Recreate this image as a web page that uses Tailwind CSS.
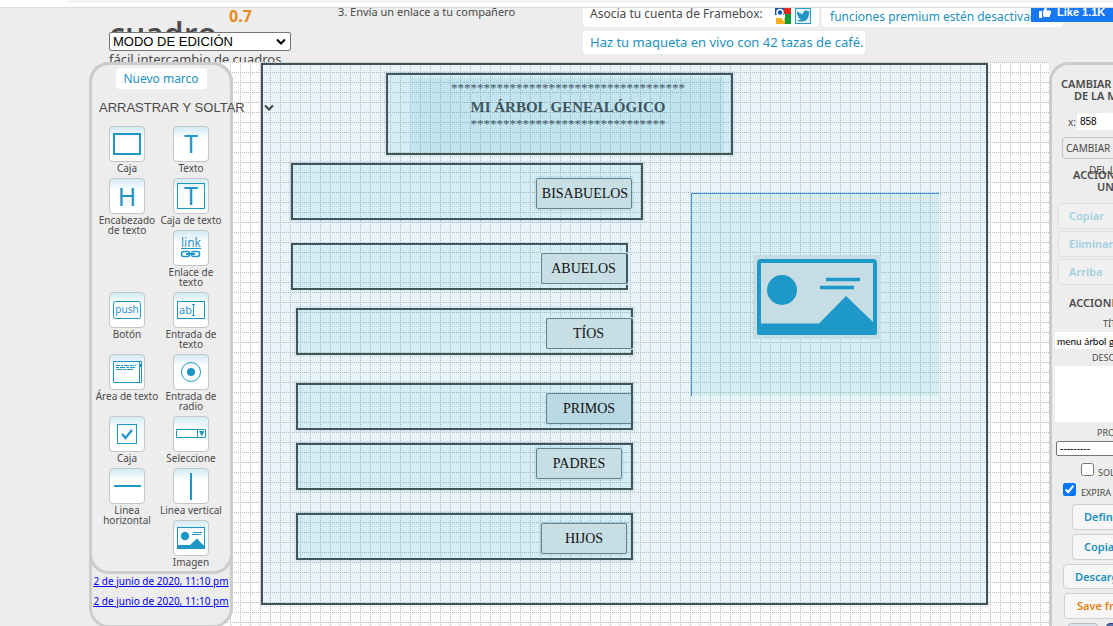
<!DOCTYPE html>
<html lang="es">
<head>
<meta charset="utf-8">
<meta name="viewport" content="width=device-width, initial-scale=1">
<title>cuadro 0.7</title>
<script src="https://cdn.jsdelivr.net/npm/@tailwindcss/browser@4"></script>
</head>
<body class="flex h-screen flex-col overflow-hidden bg-[#ededed] font-['Noto_Sans',sans-serif] text-[#4a4a4a]">

<div class="h-2 shrink-0 border-b border-[#dadcdc] bg-white">
  <div class="ml-[67px] h-[3px] rounded-bl-lg bg-[#f1f3f4]"></div>
</div>

<header class="flex h-[54px] shrink-0 items-start overflow-hidden">
  <div class="relative ml-[109px] w-[182px] shrink-0">
    <h1 class="h-6 pt-1.5 font-['Open_Sans',sans-serif] text-[32px] font-semibold leading-10 text-[#4c4c4c]">cuadro</h1>
    <span class="absolute left-[120px] top-0 text-base font-bold leading-4 text-[#e98a1c]">0.7</span>
    <div class="relative">
      <select aria-label="Modo" class="block h-[19px] w-full appearance-none rounded-xs border border-[#767676] bg-white pl-[3px] font-['Liberation_Sans',sans-serif] text-[13px] leading-4 text-black"><option>MODO DE EDICIÓN</option></select>
      <svg class="pointer-events-none absolute right-1 top-1.5 h-2 w-3" viewBox="0 0 12 8" fill="none" stroke="#000" stroke-width="2"><path d="M2 1.500 6 5.500 10 1.500"/></svg>
    </div>
    <p class="whitespace-nowrap text-[13px] leading-4">fácil intercambio de cuadros</p>
  </div>
  <ol start="3" class="-mt-1 ml-[47px] w-[245px] shrink-0 whitespace-nowrap text-[11px] leading-4"><li>3. Envía un enlace a tu compañero</li></ol>
  <div class="relative min-w-0 flex-1">
    <div class="flex gap-[3px] whitespace-nowrap text-xs">
      <div class="-mt-1 flex h-[23px] w-[236px] shrink-0 items-center gap-1 rounded-b bg-white pl-[7px]">
        <span class="w-[181px] -mt-1">Asocia tu cuenta de Framebox:</span>
        <svg class="size-4 shrink-0" viewBox="0 0 16 16"><rect width="16" height="16" rx="1" fill="#fff"/><path d="M9 0h7v6H9z" fill="#e02a20"/><path d="M10 6h6v10h-6z" fill="#119a3c"/><path d="M0 0h9v7H0z" fill="#1c53b8"/><path d="M1 10h9v6H1z" fill="#f6b21b"/><circle cx="5" cy="4.500" r="3" fill="none" stroke="#fff" stroke-width="1.500"/><path d="M4 8c2 2 5 2 5 5" fill="none" stroke="#fff" stroke-width="1.500"/></svg>
        <svg class="size-4 shrink-0" viewBox="0 0 16 16"><rect x=".5" y=".5" width="15" height="15" fill="#e6f4fa" stroke="#2b9ccb"/><path d="M2 3c2 2 4 3 6 3 0-2 1-3.500 3-3.500 1 0 2 .5 2.500 1L15 3l-1 2c0 5-3 8.500-7 8.500-2 0-4-.5-5-1.500 2 0 3 0 4-1-2-.5-2.500-1-3-2.500h1C2.500 7.500 2 6.500 2 5z" fill="#1f95c6"/></svg>
      </div>
      <div class="-mt-1 flex h-[23px] w-[241px] shrink-0 items-center rounded-b bg-white pl-2 pt-0.5 text-[#1b91c0]"><a href="#">funciones premium estén desactivadas</a></div>
    </div>
    <a href="#" class="mt-1 inline-flex h-[23px] w-[282px] items-center whitespace-nowrap rounded bg-white pl-[7px] text-[13px] text-[#1b91c0]">Haz tu maqueta en vivo con 42 tazas de café.</a>
    <button class="absolute -top-1.5 right-0 flex h-5 w-[82px] items-center gap-1.5 bg-[#1877f2] pl-2 font-['Liberation_Sans',sans-serif] text-[11px] font-bold text-white">
      <svg class="size-3 shrink-0" viewBox="0 0 12 12" fill="#fff"><path d="M0 5h3v7H0zM4 5.500 6.500 1c1.500 0 1.500 1.500 1 3.500H11c1 0 1.300 1 .8 1.600.3.600.2 1.200-.3 1.600.2.700 0 1.200-.5 1.600 0 1.500-.5 1.700-1.500 1.700H6L4 10.500z"/></svg>
      <span class="whitespace-nowrap">Like 1.1K</span>
    </button>
  </div>
</header>

<main class="flex min-h-0 flex-1 overflow-hidden">

  <aside class="relative z-10 ml-[89px] h-[566px] w-36 shrink-0 rounded-[20px] border-[3px] border-[#cccccc] bg-[#ededed]">
    <section class="-m-[3px] h-[512px] rounded-[20px] border-[3px] border-[#cccccc]">
      <div class="flex justify-center pt-[3px]"><button class="h-[21px] w-[91px] rounded bg-white text-xs text-[#1b91c0]">Nuevo marco</button></div>
      <div class="relative ml-[7px] mt-[9px] w-[180px]">
        <select aria-label="Herramientas" class="block h-5 w-full appearance-none bg-transparent font-['Liberation_Sans',sans-serif] text-[13px] leading-5 text-[#4a4a4a]"><option>ARRASTRAR Y SOLTAR</option></select>
        <svg class="pointer-events-none absolute right-1 top-1.5 h-2 w-3" viewBox="0 0 12 8" fill="none" stroke="#444" stroke-width="2"><path d="M2 1.500 6 5.500 10 1.500"/></svg>
      </div>
      <ul class="ml-[3px] mt-2 grid w-32 grid-cols-2 items-start text-center text-[10px] leading-[10px] [&_button]:mb-px [&_button]:block [&_button]:size-9 [&_button]:rounded [&_button]:border [&_button]:border-[#c6c6c6] [&_button]:bg-linear-to-b [&_button]:from-[#d3ebf5] [&_button]:to-white [&_button]:to-35% [&_li]:flex [&_li]:flex-col [&_li]:items-center [&_li]:pb-[5px] [&_svg]:size-[34px]">
        <li><button aria-labelledby="t1"><svg viewBox="0 0 34 34"><rect x="4" y="7" width="26" height="20" fill="none" stroke="#1e96c6" stroke-width="2"/></svg></button><span id="t1">Caja</span></li>
        <li><button aria-labelledby="t2"><svg viewBox="0 0 34 34"><text x="17" y="26" text-anchor="middle" font-size="25" fill="#1e96c6">T</text></svg></button><span id="t2">Texto</span></li>
        <li class="row-span-2"><button aria-labelledby="t3"><svg viewBox="0 0 34 34"><text x="17" y="27" text-anchor="middle" font-size="25" fill="#1e96c6">H</text></svg></button><span id="t3">Encabezado<br>de texto</span></li>
        <li><button aria-labelledby="t4"><svg viewBox="0 0 34 34"><rect x="3.500" y="4.500" width="27" height="25" fill="none" stroke="#1e96c6"/><text x="17" y="26" text-anchor="middle" font-size="25" fill="#1e96c6">T</text></svg></button><span id="t4" class="whitespace-nowrap">Caja de texto</span></li>
        <li><button aria-labelledby="t5"><svg viewBox="0 0 34 34" fill="none" stroke="#1e96c6"><text x="17" y="16" text-anchor="middle" font-size="12" fill="#1e96c6" stroke="none">link</text><path d="M7 17.500h20"/><rect x="7.500" y="20.500" width="8" height="5" rx="2" stroke-width="1.500"/><rect x="17.500" y="20.500" width="8" height="5" rx="2" stroke-width="1.500"/><path d="M12 23h9" stroke-width="2"/></svg></button><span id="t5">Enlace de<br>texto</span></li>
        <li><button aria-labelledby="t6"><svg viewBox="0 0 34 34"><rect x="3.500" y="8.500" width="27" height="17" rx="2" fill="none" stroke="#1e96c6"/><text x="17" y="20" text-anchor="middle" font-size="10" fill="#1e96c6">push</text></svg></button><span id="t6">Botón</span></li>
        <li><button aria-labelledby="t7"><svg viewBox="0 0 34 34" fill="none" stroke="#1e96c6"><rect x="3.500" y="8.500" width="27" height="17"/><text x="5" y="21" font-size="11" fill="#1e96c6" stroke="none">ab</text><path d="M18 11.500h3M18 22.500h3M19.500 11.500v11"/></svg></button><span id="t7">Entrada de<br>texto</span></li>
        <li><button aria-labelledby="t8"><svg viewBox="0 0 34 34" fill="none" stroke="#1e96c6"><path d="M3.500 6.500h28v21h-28zM29.500 6v22"/><path d="M30.500 9v3" stroke-width="2"/><path d="M6 10.500h20" stroke-dasharray="4 1 2 1 5 1"/><path d="M6 12.500h19" stroke-dasharray="3 1 5 1"/><path d="M6 14.500h18" stroke-dasharray="6 1 3 1"/></svg></button><span id="t8" class="whitespace-nowrap">Área de texto</span></li>
        <li><button aria-labelledby="t9"><svg viewBox="0 0 34 34"><circle cx="17" cy="17" r="9.500" fill="none" stroke="#1e96c6"/><circle cx="17" cy="17" r="4" fill="#1e96c6"/></svg></button><span id="t9">Entrada de<br>radio</span></li>
        <li><button aria-labelledby="t10"><svg viewBox="0 0 34 34" fill="none" stroke="#1e96c6"><rect x="7.500" y="7.500" width="19" height="19"/><path d="m12 17 3.500 4L22 13" stroke-width="2.200"/></svg></button><span id="t10">Caja</span></li>
        <li><button aria-labelledby="t11"><svg viewBox="0 0 34 34" fill="none" stroke="#1e96c6"><path d="M2.500 12.500h29v8h-29zM23.500 12v9"/><path d="M25 14h5.500L28 19h-.5z" fill="#1e96c6" stroke="none"/></svg></button><span id="t11">Seleccione</span></li>
        <li class="row-span-2"><button aria-labelledby="t12"><svg viewBox="0 0 34 34"><path d="M4 16h27v2H4z" fill="#1e96c6"/></svg></button><span id="t12">Linea<br>horizontal</span></li>
        <li><button aria-labelledby="t13"><svg viewBox="0 0 34 34"><path d="M16 4h2v27h-2z" fill="#1e96c6"/></svg></button><span id="t13" class="whitespace-nowrap">Linea vertical</span></li>
        <li><button aria-labelledby="t14"><svg viewBox="0 0 34 34"><rect x="3.500" y="6.500" width="27" height="21" fill="none" stroke="#1e96c6"/><circle cx="11" cy="15" r="4.200" fill="#1e96c6"/><path d="M3 24h13l7-6.500 6 6.500h2v4H3z" fill="#1e96c6"/><path d="M19 11.500h9M18 13.500h9" stroke="#1e96c6"/></svg></button><span id="t14">Imagen</span></li>
      </ul>
    </section>
    <nav class="-mx-[3px] mt-1 flex flex-col items-center gap-2 whitespace-nowrap text-[10px] leading-3 text-[#0000ee] underline">
      <a href="#">2 de junio de 2020, 11:10 pm</a>
      <a href="#">2 de junio de 2020, 11:10 pm</a>
    </nav>
  </aside>

  <!-- Free canvas: frames keep their own coordinates on a 10px dotted grid -->
  <section class="relative -ml-[13px] min-w-0 flex-1 overflow-hidden bg-white font-['Liberation_Serif',serif] text-[14px] leading-5 text-[#111]">
    <svg class="absolute inset-0 size-full" aria-hidden="true" shape-rendering="crispEdges">
      <defs><pattern id="dots" width="10" height="10" patternUnits="userSpaceOnUse"><path d="M0 0h1v1H0zM2 0h1v1H2zM4 0h1v1H4zM6 0h1v1H6zM8 0h1v1H8zM0 2h1v1H0zM0 4h1v1H0zM0 6h1v1H0zM0 8h1v1H0z" fill="#bcbcbc"/></pattern></defs>
      <rect width="100%" height="100%" fill="url(#dots)"/>
    </svg>
    <div class="absolute left-[41px] top-px h-[542px] w-[727px] border-2 border-[#40515a] bg-[#1996d0]/10 shadow-[0_0_0_2px_rgba(60,90,110,0.08)]"></div>

    <div class="absolute left-[166px] top-[11px] h-[82px] w-[347px] border-2 border-[#40565f] bg-[#26a4c6]/10 shadow-[0_0_0_2px_rgba(60,90,110,0.08)]"></div>
    <div class="absolute left-[191px] top-4 flex h-[74px] w-[313px] flex-col items-center bg-[#1e9bc8]/10 pl-px pt-px text-[#40555f]">
      <p class="h-4 text-[13px] leading-[18px]">************************************</p>
      <h2 class="h-[21px] text-[15px] font-bold leading-6">MI ÁRBOL GENEALÓGICO</h2>
      <p class="text-[13px] leading-4">******************************</p>
    </div>

    <div class="absolute left-[71px] top-[101px] h-[57px] w-[352px] border-2 border-[#40565f] bg-[#26a4c6]/10 shadow-[0_0_0_2px_rgba(60,90,110,0.08)]"></div>
    <button class="absolute left-[316px] top-[116px] h-[31px] w-24 rounded-xs border border-[#6b8089] bg-[#c8dee5] pl-0.5 shadow-[0_0_0_2px_rgba(30,150,200,0.1)]">BISABUELOS</button>

    <div class="absolute left-[71px] top-[181px] h-[47px] w-[337px] border-2 border-[#40565f] bg-[#26a4c6]/10"></div>
    <button class="absolute left-[321px] top-[191px] h-[31px] w-[87px] rounded-xs border border-r-2 border-[#6b8089] border-r-[#40565f] bg-[#c8dee5] pr-px shadow-[0_0_0_1px_#d5ebf3]">ABUELOS</button>

    <div class="absolute left-[76px] top-[246px] h-[47px] w-[337px] border-2 border-[#40565f] bg-[#26a4c6]/10 shadow-[0_0_0_2px_rgba(60,90,110,0.08)]"></div>
    <button class="absolute left-[326px] top-[256px] h-[31px] w-[87px] rounded-xs border border-r-2 border-[#6b8089] border-r-[#40565f] bg-[#c8dee5] pr-px shadow-[0_0_0_1px_#d5ebf3]">TÍOS</button>

    <div class="absolute left-[76px] top-[321px] h-[47px] w-[337px] border-2 border-[#40565f] bg-[#26a4c6]/10 shadow-[0_0_0_2px_rgba(60,90,110,0.08)]"></div>
    <button class="absolute left-[326px] top-[331px] h-[31px] w-[86px] rounded-xs border border-[#61858f] border-r-[#40565f] bg-[#b8d8e3] shadow-[-1px_2px_0_0_rgba(30,150,200,0.1)]">PRIMOS</button>

    <div class="absolute left-[76px] top-[381px] h-[47px] w-[337px] border-2 border-[#40565f] bg-[#26a4c6]/10 shadow-[0_0_0_2px_rgba(60,90,110,0.08)]"></div>
    <button class="absolute left-[316px] top-[386px] h-[31px] w-[86px] rounded-xs border border-[#6b8089] bg-[#c8dee5] shadow-[0_0_0_2px_rgba(30,150,200,0.1)]">PADRES</button>

    <div class="absolute left-[76px] top-[451px] h-[47px] w-[337px] border-2 border-[#40565f] bg-[#26a4c6]/10 shadow-[0_0_0_2px_rgba(60,90,110,0.08)]"></div>
    <button class="absolute left-[321px] top-[461px] h-[31px] w-[86px] rounded-xs border border-[#6b8089] bg-[#c8dee5] shadow-[0_0_0_2px_rgba(30,150,200,0.1)]">HIJOS</button>

    <div class="absolute left-[471px] top-[131px] flex h-[203px] w-[248px] items-center justify-center border-l border-t border-[#3b93dc] bg-[#26a4c6]/10 pl-0.5 pt-1">
      <svg class="h-[84px] w-32" viewBox="0 0 128 84" role="img" aria-label="Imagen"><rect width="128" height="84" fill="#c6dee3"/><rect x="6" y="6" width="116" height="72" rx="2" fill="none" stroke="#1d98c8" stroke-width="4"/><circle cx="29" cy="35" r="15" fill="#1d98c8"/><path d="M4 68.500h62L93 41l27 26 4 2v9q0 2-2 2H6q-2 0-2-2z" fill="#1d98c8"/><path d="M73 24.500h34M67 32.500h34" stroke="#1d98c8" stroke-width="3.500"/></svg>
    </div>
  </section>

  <aside class="z-10 -mr-20 flex h-[640px] w-36 shrink-0 flex-col items-start overflow-hidden whitespace-nowrap rounded-tl-[20px] border-[3px] border-[#cccccc] bg-[#ededed] text-[9px] leading-3">
    <h3 class="ml-[9px] mt-[13px] text-[11px] font-semibold leading-3">CAMBIAR<span class="ml-[13px] block">DE LA MAQUETA</span></h3>
    <label class="ml-4 mt-[11px] flex items-center gap-px text-[10px]">x:<input value="858" class="h-[17px] w-16 bg-white px-[3px] font-['Liberation_Sans',sans-serif] text-[10px] text-black"></label>
    <button class="ml-2.5 mt-[7px] h-[22px] w-32 rounded border border-[#c4c4c4] pl-[3px] text-left text-[10px]">CAMBIAR EL TAMAÑO</button>
    <span class="ml-[37px] mt-[5px] h-[5px] text-[10px]">DEL LIENZO</span>
    <h3 class="ml-[21px] text-[11px] font-semibold leading-3">ACCIONES DE<span class="ml-6 block">UN</span></h3>
    <div class="ml-1.5 mt-2.5 flex w-32 flex-col gap-0.5 text-[11px] font-semibold text-[#a3cfe0]">
      <button class="h-[26px] rounded border border-[#e0e0e0] bg-[#f0f0f0] pl-2.5 text-left">Copiar</button>
      <button class="h-[26px] rounded border border-[#e0e0e0] bg-[#f0f0f0] pl-2.5 text-left">Eliminar</button>
      <button class="h-[26px] rounded border border-[#e0e0e0] bg-[#f0f0f0] pl-2.5 text-left">Arriba</button>
    </div>
    <h3 class="ml-[17px] mt-3 text-[11px] font-semibold leading-3">ACCIONES</h3>
    <label for="titulo" class="ml-[51px] mt-[9px]">TÍTULO</label>
    <input id="titulo" value="menu árbol genealógico" class="ml-[3px] mt-0.5 h-[17px] w-32 bg-white px-0.5 font-['Lato',sans-serif] text-[10px] text-black">
    <label for="desc" class="ml-10 mt-[3px]">DESCRIPCIÓN</label>
    <textarea id="desc" class="ml-[3px] mt-0.5 h-14 w-32 shrink-0 resize-none bg-white"></textarea>
    <label for="pro" class="ml-[45px] mt-[5px]">PROYECTO</label>
    <select id="pro" class="ml-1 mt-0.5 h-[15px] w-32 appearance-none rounded-xs border border-[#767676] bg-white pl-[3px] font-['Liberation_Sans',sans-serif] text-[10px] leading-3 text-black"><option>---------</option></select>
    <label class="ml-[29px] mt-[7px] flex h-[13px] items-center gap-1"><input type="checkbox" class="size-[13px]"><span class="pt-1.5">SOLO</span></label>
    <label class="ml-[11px] mt-[7px] flex h-[13px] items-center gap-[5px]"><input type="checkbox" checked class="size-[13px]"><span class="pt-1.5">EXPIRA</span></label>
    <div class="ml-[11px] mt-2 flex flex-col items-start text-[11px] font-semibold text-[#1b91c0]">
      <button class="mb-1 ml-[9px] h-[26px] w-24 rounded border border-[#cfcfcf] bg-[#f6f6f6] pl-[11px] text-left">Definir</button>
      <button class="mb-1 ml-[9px] h-[26px] w-24 rounded border border-[#cfcfcf] bg-[#f6f6f6] pl-[11px] text-left">Copiar</button>
      <button class="mb-1 h-[25px] w-28 rounded border border-[#cfcfcf] bg-[#f6f6f6] pl-[11px] text-left">Descargar</button>
      <button class="mb-1 ml-px h-[26px] w-28 rounded border border-[#cfcfcf] bg-[#f6f6f6] pl-3 text-left text-[#e5820f]">Save frame</button>
      <div class="ml-[5px] flex gap-2"><button aria-label="Compartir" class="h-5 w-[30px] rounded border border-[#b5bcc4] bg-[#d9e3ea]"></button><button aria-label="Facebook" class="h-5 w-[30px] rounded border border-[#29447e] bg-[#5872a7]"></button></div>
    </div>
  </aside>
</main>
</body>
</html>
